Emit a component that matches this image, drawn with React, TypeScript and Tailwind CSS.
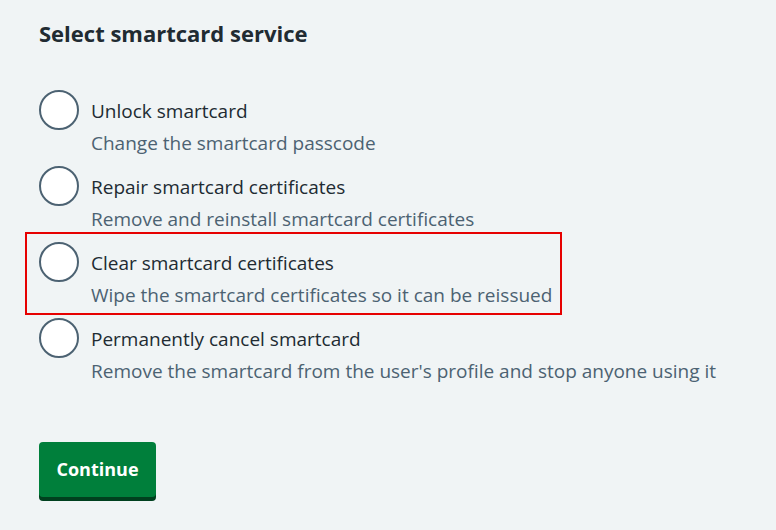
import React, { useState } from 'react';

const options = [
  { id: 'unlock', label: 'Unlock smartcard', hint: 'Change the smartcard passcode' },
  { id: 'repair', label: 'Repair smartcard certificates', hint: 'Remove and reinstall smartcard certificates' },
  { id: 'clear', label: 'Clear smartcard certificates', hint: 'Wipe the smartcard certificates so it can be reissued' },
  { id: 'cancel', label: 'Permanently cancel smartcard', hint: "Remove the smartcard from the user's profile and stop anyone using it" },
];

const App: React.FC = () => {
  const [selected, setSelected] = useState<string | null>(null);

  return (
    <div className="min-h-screen w-full bg-[#f0f4f5] text-[#212b32] font-['Open_Sans',sans-serif]">
      <div className="px-[39px] pt-[17px]">
        <h1 className="text-[22px] leading-[32px] font-bold mb-[41px]">Select smartcard service</h1>

        <div className="relative">
          {options.map(opt => (
            <label key={opt.id} className="relative block mb-[11px] cursor-pointer">
              {opt.id === 'clear' && (
                <span className="absolute left-[-14px] top-[-10px] w-[537px] h-[83px] border-2 border-[#e60000] pointer-events-none" />
              )}
              <div className="flex items-center h-10 gap-3">
                <input
                  type="radio"
                  name="service"
                  checked={selected === opt.id}
                  onChange={() => setSelected(opt.id)}
                  className="sr-only"
                />
                <span className="w-10 h-10 rounded-full border-2 border-[#4c6272] bg-white shrink-0 flex items-center justify-center">
                  {selected === opt.id && <span className="w-5 h-5 rounded-full bg-[#212b32]" />}
                </span>
                <span className="pt-[2px] text-[19px] leading-6">{opt.label}</span>
              </div>
              <div className="pt-px pl-[52px] text-[19px] leading-6 text-[#4c6272]">{opt.hint}</div>
            </label>
          ))}
        </div>

        <button
          type="button"
          className="mt-[48px] w-[117px] h-[55px] rounded-[4px] bg-[#007f3b] text-white text-[18px] font-bold shadow-[0_4px_0_#00401e]"
        >
          Continue
        </button>
      </div>
    </div>
  );
};

export default App;
